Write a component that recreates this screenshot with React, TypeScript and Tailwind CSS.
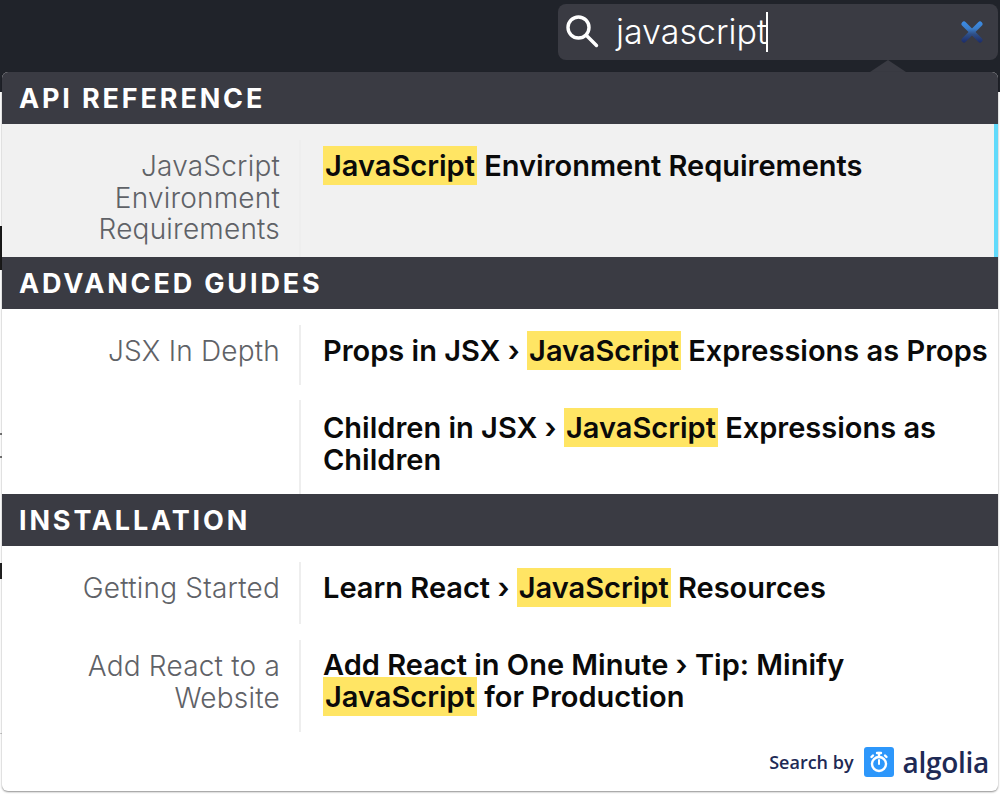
import React from "react";

const Hl = ({ children }: { children: React.ReactNode }) => (
  <span className="bg-[#ffe564] px-[2px] py-[2px]">{children}</span>
);

const SectionHeader = ({ title }: { title: string }) => (
  <div className="h-[52px] bg-[#3a3b43] pl-[17px] pt-[9px] text-[27px] leading-[36px] font-bold tracking-[2.85px] text-white">
    {title}
  </div>
);

const Row = ({
  section,
  children,
  className,
  cellClass,
}: {
  section?: React.ReactNode;
  children: React.ReactNode;
  className?: string;
  cellClass: string;
}) => (
  <div className={"flex " + className}>
    <div className="w-[297px] pr-[19px] pt-[11px] text-right text-[28px] leading-[31.5px] font-light tracking-[0.2px] text-[#5f6267]">
      {section}
    </div>
    <div className={"flex-1 border-l-2 border-[#eeeeee] pl-[22px] text-[29px] leading-[31.5px] font-semibold text-[#0a0a0a] " + cellClass}>
      {children}
    </div>
  </div>
);

export default function App() {
  return (
    <div className="relative h-[795px] w-[1000px] overflow-hidden bg-white font-['Inter',sans-serif]">
      <div className="flex h-[92px] items-start justify-end bg-[#20232a] pr-[2px] pt-[4px]">
        <div className="flex h-[56px] w-[440px] items-center rounded-[8px] bg-[#3a3b43] pl-[7px] pr-[15px]">
          <svg width="34" height="34" viewBox="0 0 34 34" fill="none" stroke="white" strokeWidth="3.4" strokeLinecap="round" className="mb-[2px]">
            <circle cx="13.5" cy="13.5" r="10.5" />
            <path d="M21.5 21.5 L31.5 31.5" />
          </svg>
          <div className="ml-[17px] flex flex-1 items-center text-[34px] leading-[44px] font-light text-white">
            javascript
            <span className="ml-[-1px] h-[40px] w-[2px] bg-white" />
          </div>
          <svg width="22" height="22" viewBox="0 0 22 22" fill="none" strokeWidth="5" strokeLinecap="round">
            <defs>
              <linearGradient id="clear" x1="0" y1="0" x2="0" y2="22" gradientUnits="userSpaceOnUse">
                <stop offset="0" stopColor="#3c8ee8" />
                <stop offset="0.35" stopColor="#3a7cc8" />
                <stop offset="0.6" stopColor="#2f4f86" />
                <stop offset="1" stopColor="#1b2a68" />
              </linearGradient>
            </defs>
            <path d="M3 3 L19 19" stroke="url(#clear)" />
            <path d="M19 3 L3 19" stroke="url(#clear)" />
          </svg>
        </div>
      </div>

      {/* bits of the page under the dropdown */}
      <div className="absolute left-0 top-[226px] h-[44px] w-[2px] bg-[#1a1a1a]" />
      <div className="absolute left-0 top-[433px] h-[2px] w-[2px] bg-[#777777]" />
      <div className="absolute left-0 top-[456px] h-[2px] w-[2px] bg-[#777777]" />
      <div className="absolute left-0 top-[563px] h-[16px] w-[2px] bg-[#222222]" />
      <div className="absolute left-0 top-[733px] h-[1px] w-[2px] bg-[#cccccc]" />

      <div className="absolute left-[870px] top-[60px] h-0 w-0 border-x-[18px] border-b-[12px] border-x-transparent border-b-[#3a3b43]" />

      <div className="absolute left-[2px] top-[72px] h-[719px] w-[996px] overflow-hidden rounded-[6px] bg-white shadow-[0_1px_2px_rgba(0,0,0,0.45)]">
        <SectionHeader title="API REFERENCE" />
        <div className="relative bg-[#f1f1f1] pt-[16px]">
          <Row className="h-[117px]" cellClass="pt-[10px]" section={<>JavaScript<br />Environment<br />Requirements</>}>
            <Hl>JavaScript</Hl> Environment Requirements
          </Row>
          <div className="absolute right-0 top-0 h-full w-[4px] bg-[#61dafb]" />
        </div>

        <SectionHeader title="ADVANCED GUIDES" />
        <div className="pt-[16px]">
          <Row className="h-[60px]" cellClass="pt-[10px]" section="JSX In Depth">
            Props in JSX › <Hl>JavaScript</Hl> Expressions as Props
          </Row>
          <Row className="mt-[15px] h-[94px]" cellClass="pt-[12px]">
            <div>Children in JSX › <Hl>JavaScript</Hl> Expressions as</div>
            <div>Children</div>
          </Row>
        </div>

        <SectionHeader title="INSTALLATION" />
        <div className="pt-[16px]">
          <Row className="h-[62px]" cellClass="pt-[10px]" section="Getting Started">
            Learn React › <Hl>JavaScript</Hl> Resources
          </Row>
          <Row className="mt-[16px] h-[92px]" cellClass="pt-[9px]" section={<>Add React to a<br />Website</>}>
            <div>Add React in One Minute › Tip: Minify</div>
            <div><Hl>JavaScript</Hl> for Production</div>
          </Row>
        </div>

        <div className="flex items-center justify-end pr-[9px] pt-[15px] font-['Open_Sans',sans-serif] text-[#1e2a55]">
          <span className="text-[18px] leading-[30px] font-semibold">Search by</span>
          <div className="ml-[10px] flex h-[30px] w-[30px] items-center justify-center rounded-[3px] bg-[#2d97fb]">
            <svg width="30" height="30" viewBox="0 0 30 30" fill="none" stroke="white" strokeWidth="2.4" strokeLinecap="round">
              <circle cx="15" cy="17" r="7" />
              <path d="M15 17 V13" strokeWidth="2" />
              <path d="M13 6 H17" />
              <path d="M15 6 V9" />
              <path d="M7.5 10 L9 8.5" />
              <path d="M22.5 10 L21 8.5" />
            </svg>
          </div>
          <span className="ml-[9px] text-[28px] leading-[30px] font-semibold tracking-[-0.3px]">algolia</span>
        </div>
      </div>
    </div>
  );
}
